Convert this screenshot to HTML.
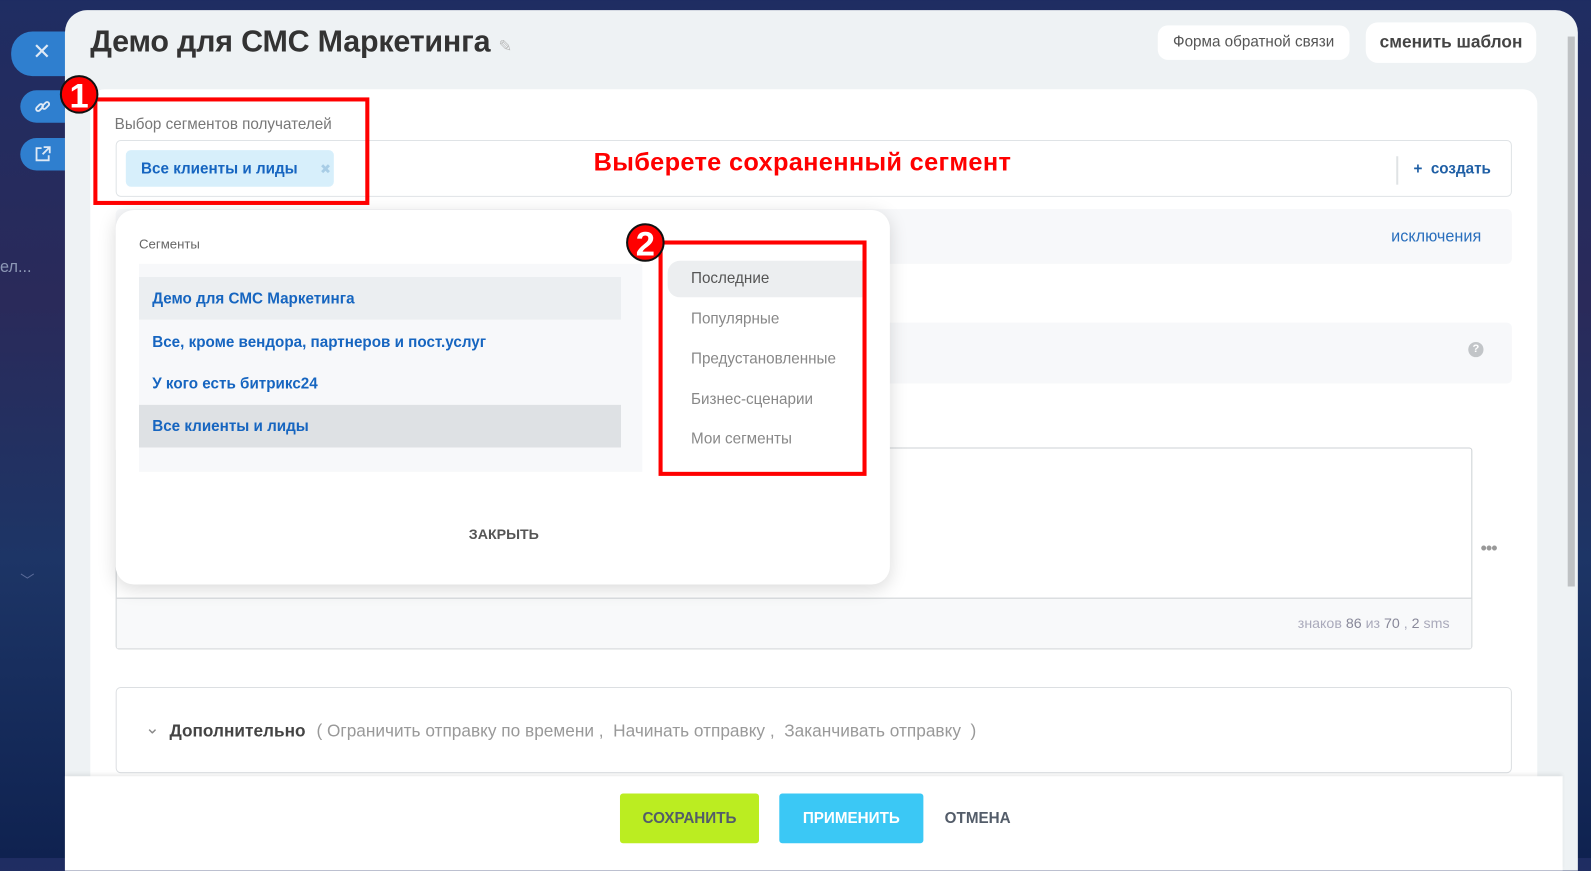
<!DOCTYPE html>
<html><head><meta charset="utf-8"><style>
*{box-sizing:border-box;margin:0;padding:0}
body{width:1591px;height:858px;overflow:hidden;position:relative;font-family:"Liberation Sans","DejaVu Sans",sans-serif;background:linear-gradient(180deg,#1f2d62 0%,#2a2a5a 35%,#1d3566 65%,#0f2250 100%)}
#w{position:absolute;left:0;top:0;width:1568px;height:846px;transform:scale(1.0147);transform-origin:0 0}
.a{position:absolute}
.side{width:54px;height:42px;border-radius:21px 0 0 21px;background:#2f7fcf;left:11px}
.panel{left:64px;top:10px;width:1491px;height:848px;background:#eef2f4;border-radius:22px 22px 0 0}
.card{left:89px;top:88px;width:1426px;height:700px;background:#fff;border-radius:14px}
.t{white-space:nowrap}
.blue{color:#1665c0}
.redbox{border:4px solid #f00}
.num{width:38px;height:38px;border-radius:50%;background:#f00;color:#fff;font-weight:bold;font-size:34px;line-height:38px;text-align:center;border:2px solid #111}
</style></head><body><div id="w">
<div class="a side" style="top:31px;height:44px"></div>
<div class="a t" style="left:32px;top:38px;color:#dfe9f5;font-size:22px">✕</div>
<div class="a side" style="top:89px;width:44px;left:20px;height:32px;border-radius:16px 0 0 16px;background:#2f7fcf"></div>
<div class="a side" style="top:136px;width:44px;left:20px;height:32px;border-radius:16px 0 0 16px;background:#2f7fcf"></div>
<svg class="a" style="left:33px;top:96px" width="18" height="18" viewBox="0 0 18 18"><g fill="none" stroke="#dfe9f5" stroke-width="1.8"><rect x="2" y="8" width="8" height="4" rx="2" transform="rotate(-45 6 10)"/><rect x="8" y="6" width="8" height="4" rx="2" transform="rotate(-45 12 8)"/></g></svg>
<svg class="a" style="left:33px;top:143px" width="18" height="18" viewBox="0 0 18 18"><g fill="none" stroke="#dfe9f5" stroke-width="1.8"><path d="M8 3H3v12h12v-5"/><path d="M10 2h6v6M16 2l-7 7"/></g></svg>
<div class="a t" style="left:0;top:255px;color:#8d98b6;font-size:16px">ел...</div>
<div class="a t" style="left:20px;top:562px;color:#5c6c9a;font-size:14px">﹀</div>

<div class="a panel"></div>
<div class="a" style="left:1545px;top:36px;width:7px;height:542px;background:#bfc2c4"></div>
<div class="a t" style="left:89px;top:25px;font-size:30px;color:#333;font-weight:bold;letter-spacing:-0.2px">Демо для СМС Маркетинга <span style="font-size:16px;color:#bbb;font-weight:normal">✎</span></div>
<div class="a t" style="left:1141px;top:25px;width:189px;height:34px;background:#fff;border-radius:10px;font-size:15px;color:#555;line-height:34px;text-align:center">Форма обратной связи</div>
<div class="a t" style="left:1346px;top:22px;width:168px;height:40px;background:#fff;border-radius:12px;font-size:17px;font-weight:bold;color:#444;line-height:40px;text-align:center">сменить шаблон</div>

<div class="a card"></div>
<div class="a t" style="left:113px;top:114px;font-size:15px;color:#777">Выбор сегментов получателей</div>
<div class="a" style="left:114px;top:138px;width:1376px;height:56px;border:1px solid #dfe3e6;border-radius:5px"></div>
<div class="a t blue" style="left:124px;top:148px;width:205px;height:36px;background:#d7effb;border-radius:5px;font-size:15px;font-weight:bold;line-height:38px;padding-left:15px">Все клиенты и лиды<span style="color:#a8cde6;margin-left:22px;font-size:13px">✖</span></div>
<div class="a t" style="left:585px;top:146px;font-size:25px;font-weight:bold;color:#f00;letter-spacing:0.3px">Выберете сохраненный сегмент</div>
<div class="a" style="left:1376px;top:154px;width:2px;height:28px;background:#e0e3e5"></div>
<div class="a t blue" style="left:1393px;top:158px;font-size:15px;font-weight:bold;color:#1f5fa5">+ &nbsp;создать</div>
<div class="a" style="left:114px;top:206px;width:1376px;height:54px;background:#f7f8fa;border-radius:5px"></div>
<div class="a t" style="left:1371px;top:225px;font-size:16px;color:#2a6fbd">исключения</div>
<div class="a" style="left:114px;top:318px;width:1376px;height:60px;background:#f7f8fa;border-radius:5px"></div>
<div class="a" style="left:1447px;top:337px;width:15px;height:15px;border-radius:50%;background:#c2c5c8;color:#fff;font-size:11px;font-weight:bold;text-align:center;line-height:15px">?</div>
<div class="a" style="left:114px;top:441px;width:1337px;height:199px;border:1px solid #cdd1d4;border-radius:3px;background:#fff"></div>
<div class="a" style="left:115px;top:589px;width:1335px;height:50px;background:#f8f9fa;border-top:1px solid #cdd1d4"></div>
<div class="a t" style="left:1279px;top:606px;font-size:14px;color:#aab">знаков <span style="color:#889">86</span> из <span style="color:#889">70</span> , <span style="color:#889">2</span> sms</div>
<div class="a t" style="left:1459px;top:530px;font-size:18px;color:#999;letter-spacing:-1px">•••</div>

<div class="a" style="left:114px;top:677px;width:1376px;height:85px;border:1px solid #dcdfe2;border-radius:5px;background:#fff"></div>
<div class="a t" style="left:143px;top:708px;font-size:17px;color:#888">⌄</div>
<div class="a t" style="left:167px;top:711px;font-size:17px;color:#444;font-weight:bold">Дополнительно <span style="font-weight:normal;color:#999;margin-left:6px">( Ограничить отправку по времени ,&nbsp; Начинать отправку ,&nbsp; Заканчивать отправку &nbsp;)</span></div>

<div class="a" style="left:64px;top:765px;width:1476px;height:93px;background:#fff;box-shadow:0 -2px 4px rgba(0,0,0,.08)"></div>
<div class="a t" style="left:611px;top:782px;width:137px;height:49px;background:#bbed21;border-radius:3px;font-size:15px;font-weight:bold;color:#535c69;line-height:49px;text-align:center">СОХРАНИТЬ</div>
<div class="a t" style="left:768px;top:782px;width:142px;height:49px;background:#3bc8f5;border-radius:3px;font-size:15px;font-weight:bold;color:#fff;line-height:49px;text-align:center">ПРИМЕНИТЬ</div>
<div class="a t" style="left:931px;top:798px;font-size:15px;font-weight:bold;color:#535c69">ОТМЕНА</div>

<div class="a" style="left:114px;top:207px;width:763px;height:369px;background:#fff;border-radius:18px;box-shadow:0 4px 18px rgba(0,0,0,.15)"></div>
<div class="a t" style="left:137px;top:233px;font-size:13px;color:#666">Сегменты</div>
<div class="a" style="left:137px;top:260px;width:496px;height:205px;background:#f7f8fa"></div>
<div class="a t blue" style="left:137px;top:273px;width:475px;height:42px;background:#ebeef1;font-size:15px;font-weight:bold;line-height:44px;padding-left:13px">Демо для СМС Маркетинга</div>
<div class="a t blue" style="left:150px;top:329px;font-size:15px;font-weight:bold">Все, кроме вендора, партнеров и пост.услуг</div>
<div class="a t blue" style="left:150px;top:370px;font-size:15px;font-weight:bold">У кого есть битрикс24</div>
<div class="a t blue" style="left:137px;top:399px;width:475px;height:42px;background:#dee1e4;font-size:15px;font-weight:bold;line-height:44px;padding-left:13px">Все клиенты и лиды</div>
<div class="a" style="left:658px;top:257px;width:192px;height:36px;background:#eceef0;border-radius:12px 0 0 12px"></div>
<div class="a t" style="left:681px;top:266px;font-size:15px;color:#555">Последние</div>
<div class="a t" style="left:681px;top:306px;font-size:15px;color:#888">Популярные</div>
<div class="a t" style="left:681px;top:345px;font-size:15px;color:#888">Предустановленные</div>
<div class="a t" style="left:681px;top:385px;font-size:15px;color:#888">Бизнес-сценарии</div>
<div class="a t" style="left:681px;top:424px;font-size:15px;color:#888">Мои сегменты</div>
<div class="a t" style="left:462px;top:518px;font-size:14px;font-weight:bold;color:#555">ЗАКРЫТЬ</div>

<div class="a redbox" style="left:92px;top:96px;width:272px;height:106px"></div>
<div class="a num" style="left:59px;top:74px">1</div>
<div class="a redbox" style="left:649px;top:237px;width:205px;height:232px"></div>
<div class="a num" style="left:617px;top:220px">2</div>
</div></body></html>
